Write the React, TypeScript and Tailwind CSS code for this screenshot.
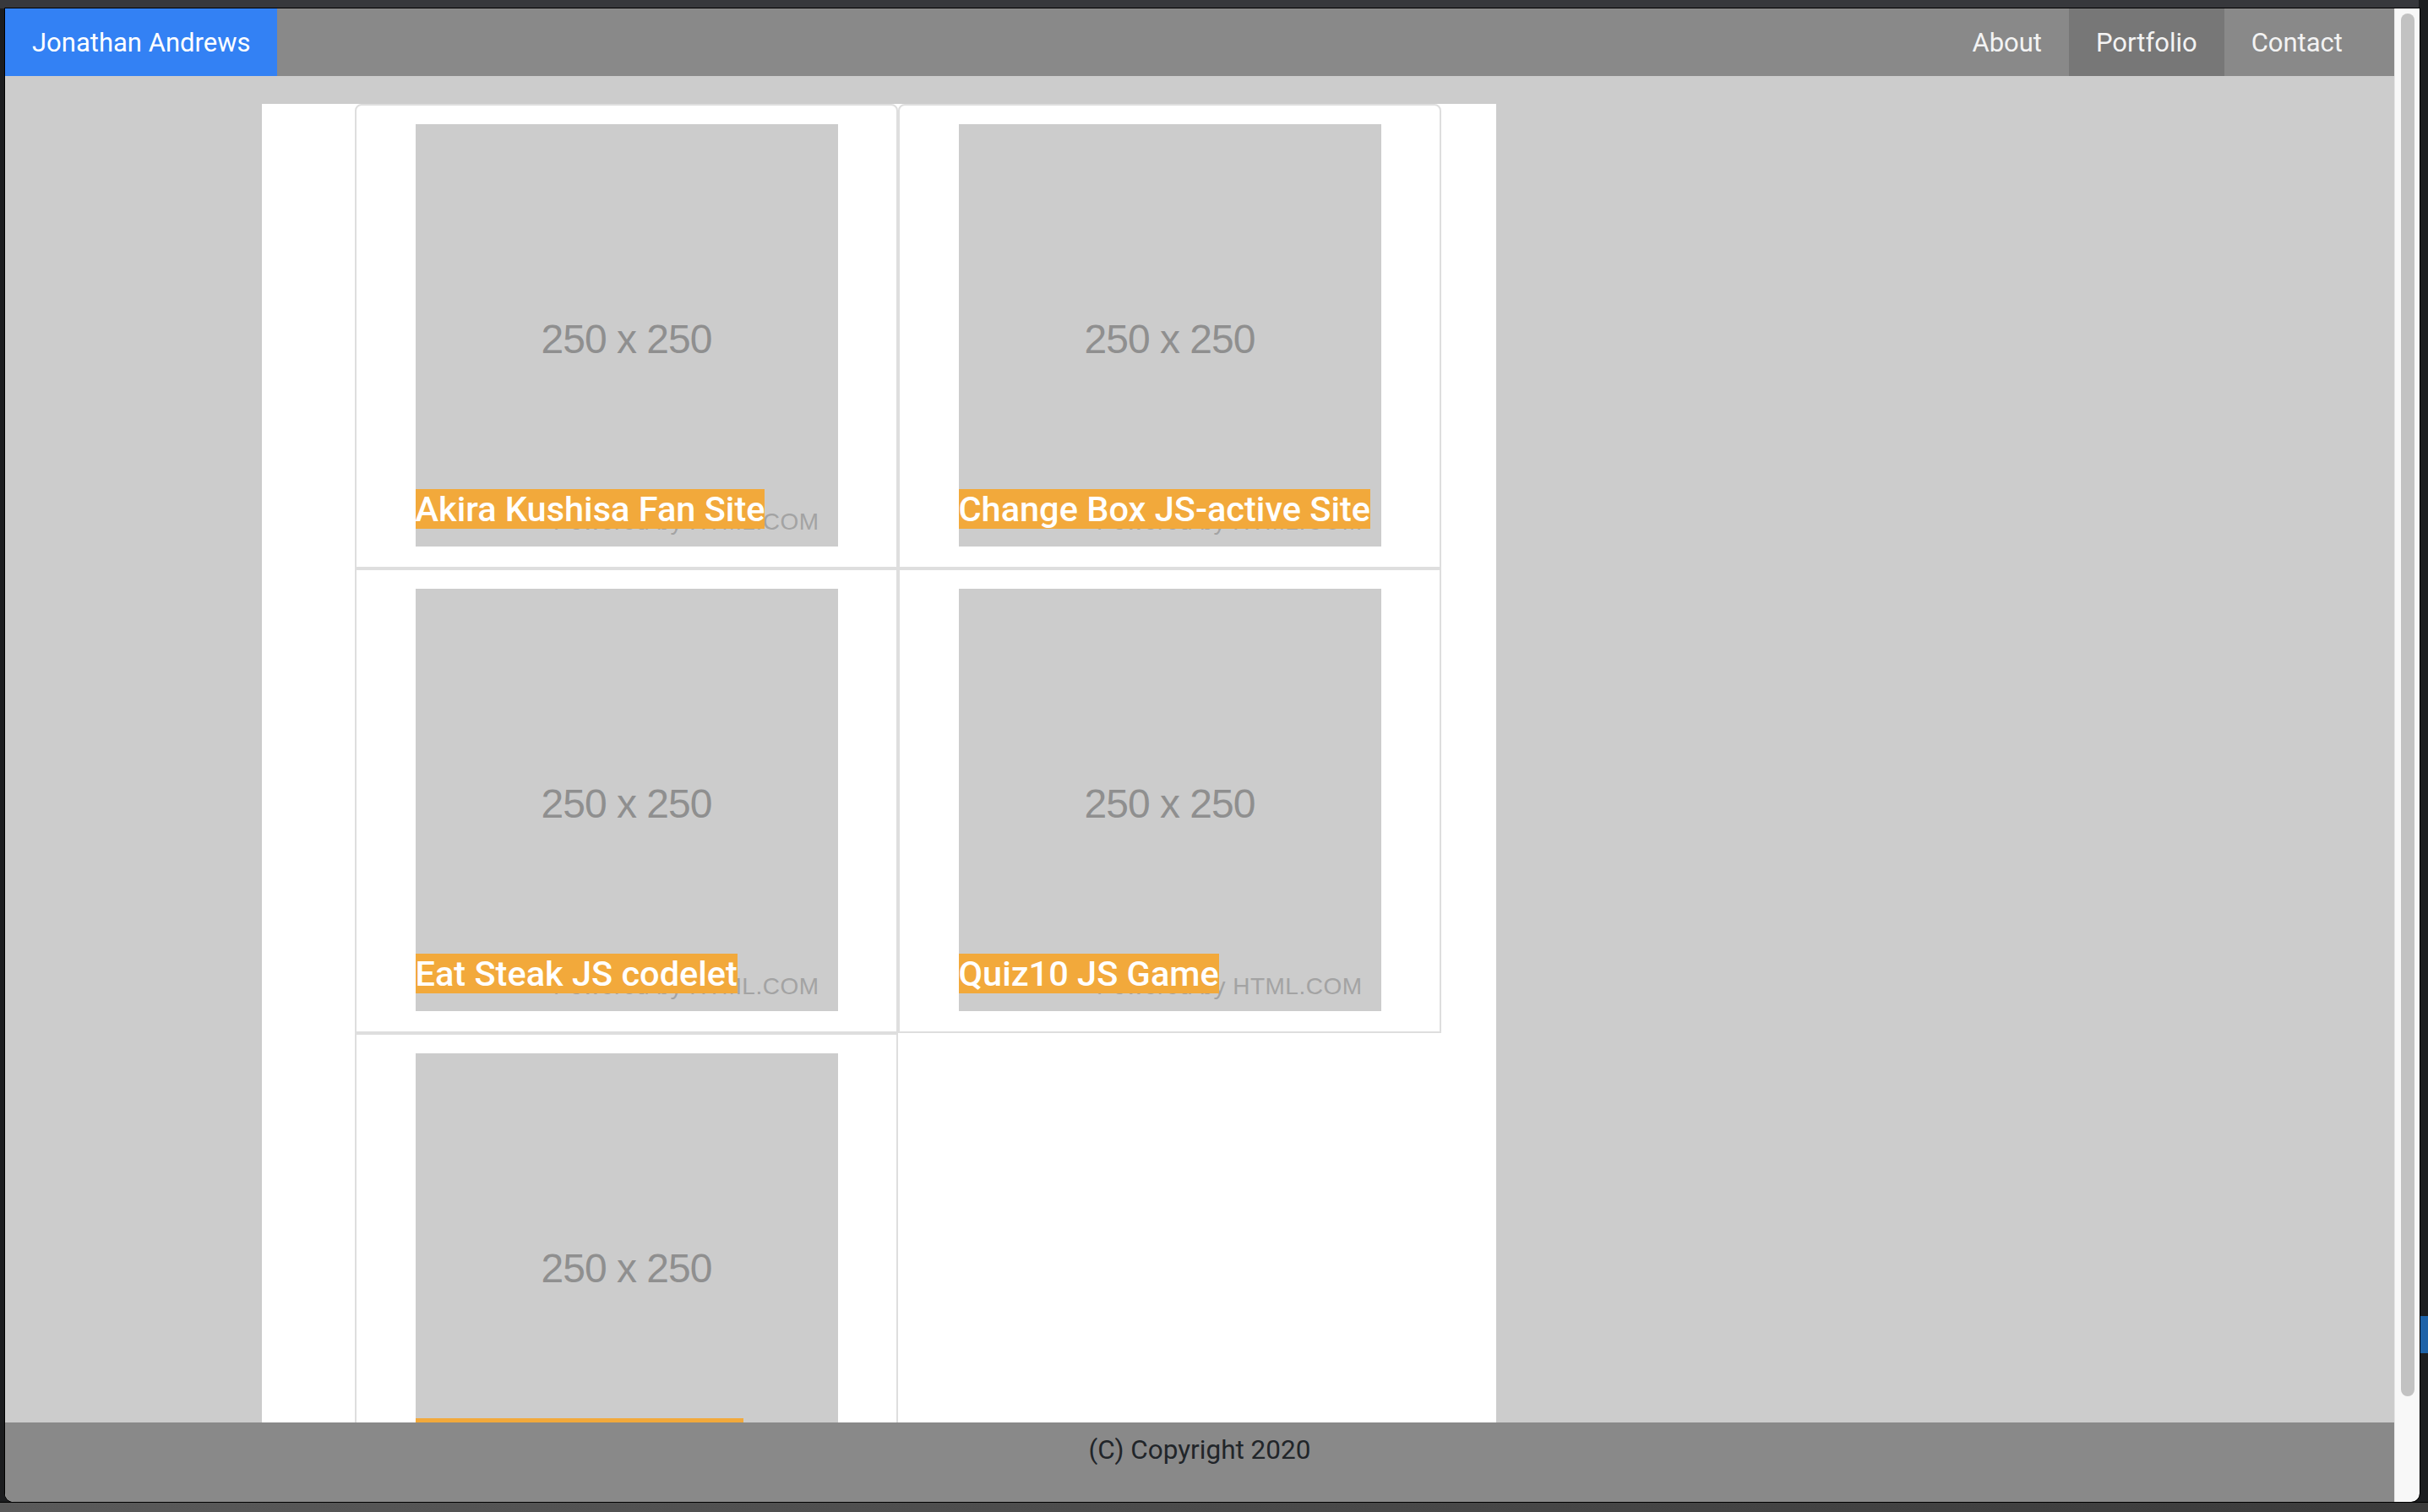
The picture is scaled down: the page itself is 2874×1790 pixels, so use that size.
import React from "react";

type Project = {
  title: string;
};

const projects: Project[] = [
  { title: "Akira Kushisa Fan Site" },
  { title: "Change Box JS-active Site" },
  { title: "Eat Steak JS codelet" },
  { title: "Quiz10 JS Game" },
  { title: "Tic Tac Toe JS Game" },
];

const navLinks = ["About", "Portfolio", "Contact"];

// 250x250 placeholder image, drawn at 2x like the screenshot
function Placeholder({ title }: { title: string }) {
  return (
    <div className="relative h-[500px] w-[500px] bg-[#cccccc]">
      <div className="flex h-full items-center justify-center pt-[10px] font-['Liberation_Sans',Arial,sans-serif] text-[48px] tracking-[-1px] text-[#8f8f8f]">
        250 x 250
      </div>
      <span className="absolute bottom-[15px] right-[22px] font-['Liberation_Sans',Arial,sans-serif] text-[28px] leading-none tracking-[0.5px] text-[#a3a3a3]">
        Powered by HTML.COM
      </span>
      <div className="absolute left-0 top-[432px] h-[47px] whitespace-nowrap bg-[#f2a93b] text-[41.5px] font-medium leading-[47px] text-white">
        {title}
      </div>
    </div>
  );
}

function ProjectCard({ title, first }: { title: string; first?: boolean }) {
  return (
    <div
      className={`flex h-[550px] justify-center border-2 border-[#dedede] pt-[22px] pb-[24px] ${
        first ? "rounded-t-[8px]" : ""
      }`}
    >
      <Placeholder title={title} />
    </div>
  );
}

export default function App() {
  return (
    <div className="relative h-[1790px] w-[2874px] overflow-hidden bg-[#1c1d1f] font-['Roboto',sans-serif]">
      {/* browser chrome strip */}
      <div className="mr-[11px] h-[10px] bg-[#37383c]" />

      <div className="flex pl-[6px]">
        <div className="flex h-[1768px] w-[2858px] overflow-hidden rounded-b-[10px] bg-[#cccccc] outline outline-black">
          <div className="relative flex w-[2828px] flex-col">
            {/* navbar */}
            <nav className="flex h-[80px] shrink-0 items-center justify-between bg-[#898989]">
              <div className="flex h-full items-center bg-[#3381f4] px-8 pt-[2px] text-[31px] text-white">
                Jonathan Andrews
              </div>
              <ul className="mr-[29px] flex h-full">
                {navLinks.map((link) => (
                  <li
                    key={link}
                    className={`flex h-full items-center px-8 pt-[2px] text-[31px] text-[#f3f3f3] ${
                      link === "Portfolio" ? "bg-[#777777]" : ""
                    }`}
                  >
                    {link}
                  </li>
                ))}
              </ul>
            </nav>

            {/* portfolio grid */}
            <main className="flex-1 overflow-hidden bg-[#cccccc] pt-[33px]">
              <div className="ml-[304px] min-h-[1700px] w-[1461px] bg-white pl-[110px]">
                <div className="grid grid-cols-[643px_643px]">
                  {projects.map((p, i) => (
                    <ProjectCard key={p.title} title={p.title} first={i < 2} />
                  ))}
                </div>
              </div>
            </main>

            {/* fixed footer */}
            <footer className="absolute inset-x-0 bottom-0 h-[94px] bg-[#898989] pt-[10px] text-center text-[31.5px] leading-[46px] text-[#212529]">
              (C) Copyright 2020
            </footer>
          </div>

          {/* scrollbar */}
          <div className="w-[30px] border-l border-[#e6e6e6] bg-[#f8f8f8] pl-[7px] pt-[6px]">
            <div className="h-[1637px] w-[16px] rounded-full bg-[#c2c2c2]" />
          </div>
        </div>
      </div>

      <div className="h-[12px] border-t border-black bg-gradient-to-r from-[#5a5a5a] to-[#3b3b3b]" />

      {/* edge of another window behind */}
      <div className="absolute right-0 top-[1558px] h-[44px] w-[9px] bg-[#1d62a8]" />
    </div>
  );
}
